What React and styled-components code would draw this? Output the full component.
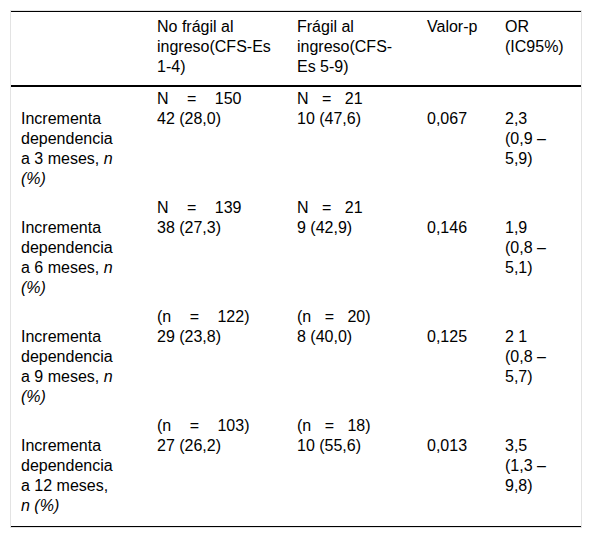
import React from "react";
import styled, { createGlobalStyle } from "styled-components";

const Global = createGlobalStyle`
  html, body { margin: 0; padding: 0; background: #fff; }
  body { font-family: "Liberation Sans", Arial, sans-serif; color: #000; }
`;

const Page = styled.div`
  padding: 10px;
`;

const Frame = styled.div`
  border: 1px solid #e3e3e3;
  width: 570px;
`;

const Table = styled.table`
  width: 570px;
  border-collapse: collapse;
  table-layout: fixed;
  font-size: 16px;
  line-height: 20px;
  border-top: 1px solid #000;
  border-bottom: 1px solid #000;
`;

const HeadCell = styled.th`
  text-align: left;
  font-weight: normal;
  vertical-align: top;
  padding: 5px ${(p) => p.$pr || 10}px 8px 10px;
  border-bottom: 2px solid #000;
`;

const SubCell = styled.td`
  vertical-align: top;
  padding: 2px 10px 0 10px;
  word-spacing: ${(p) => p.$ws || 0}px;
  white-space: nowrap;
`;

const Cell = styled.td`
  vertical-align: top;
  padding: 0 ${(p) => p.$pr || 10}px ${(p) => (p.$last ? 10 : 7)}px 10px;
`;

const Em = styled.i`
  font-style: italic;
`;

const cols = [136, 140, 130, 78, 86];

const rows = [
  { n1: "N = 150", n2: "N = 21", mes: "3", c1: "42 (28,0)", c2: "10 (47,6)", p: "0,067", or: "2,3", ci: "(0,9\u00a0–", ci2: "5,9)" },
  { n1: "N = 139", n2: "N = 21", mes: "6", c1: "38 (27,3)", c2: "9 (42,9)", p: "0,146", or: "1,9", ci: "(0,8\u00a0–", ci2: "5,1)" },
  { n1: "(n = 122)", n2: "(n = 20)", mes: "9", c1: "29 (23,8)", c2: "8 (40,0)", p: "0,125", or: "2 1", ci: "(0,8\u00a0–", ci2: "5,7)" },
  { n1: "(n = 103)", n2: "(n = 18)", mes: "12", c1: "27 (26,2)", c2: "10 (55,6)", p: "0,013", or: "3,5", ci: "(1,3\u00a0–", ci2: "9,8)" },
];

export default function App() {
  return (
    <Page>
      <Global />
      <Frame>
        <Table>
          <colgroup>
            {cols.map((w, i) => (
              <col key={i} style={{ width: w }} />
            ))}
          </colgroup>
          <thead>
            <tr>
              <HeadCell $pr={30}></HeadCell>
              <HeadCell>No frágil al ingreso(CFS-Es 1-4)</HeadCell>
              <HeadCell>Frágil al ingreso(CFS-Es 5-9)</HeadCell>
              <HeadCell>Valor-p</HeadCell>
              <HeadCell $pr={12}>OR (IC95%)</HeadCell>
            </tr>
          </thead>
          <tbody>
            {rows.map((r, i) => {
              const last = i === rows.length - 1;
              return (
                <React.Fragment key={i}>
                  <tr>
                    <SubCell />
                    <SubCell $ws={14}>{r.n1}</SubCell>
                    <SubCell $ws={9}>{r.n2}</SubCell>
                    <SubCell />
                    <SubCell />
                  </tr>
                  <tr>
                    <Cell $pr={30} $last={last}>
                      Incrementa dependencia a {r.mes} meses, <Em>n (%)</Em>
                    </Cell>
                    <Cell $last={last}>{r.c1}</Cell>
                    <Cell $last={last}>{r.c2}</Cell>
                    <Cell $last={last}>{r.p}</Cell>
                    <Cell $pr={12} $last={last}>
                      {r.or} {r.ci} {r.ci2}
                    </Cell>
                  </tr>
                </React.Fragment>
              );
            })}
          </tbody>
        </Table>
      </Frame>
    </Page>
  );
}
